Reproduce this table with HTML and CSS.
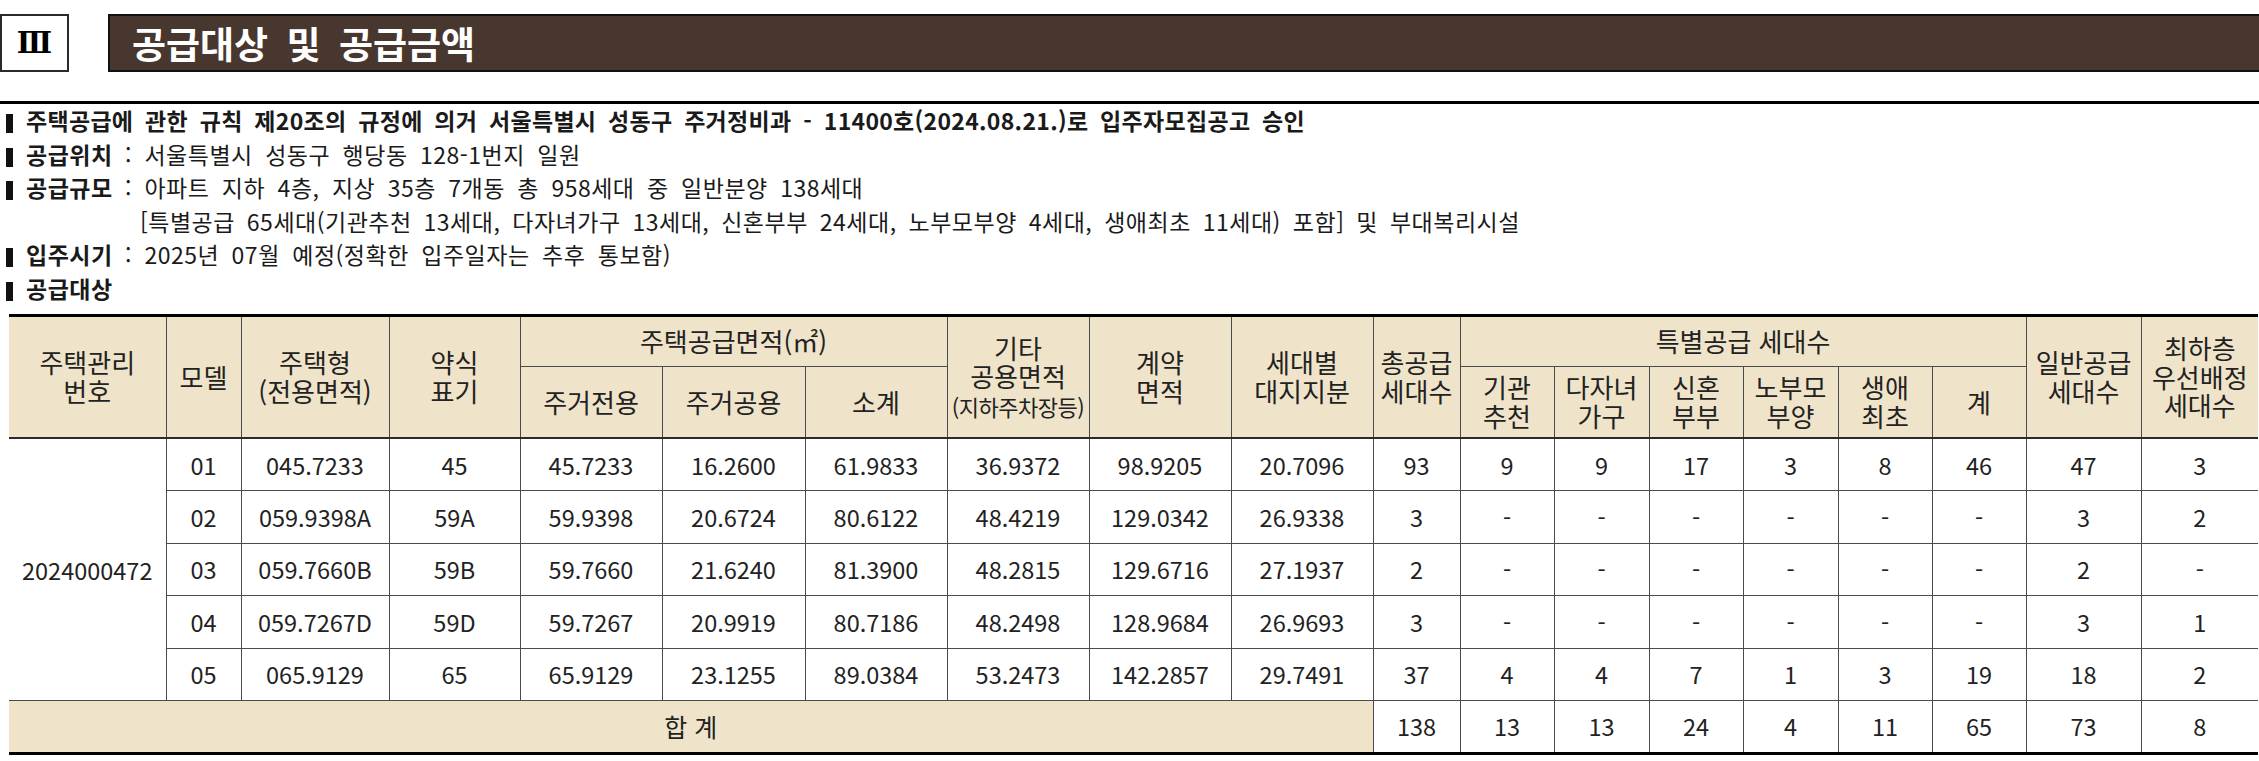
FILE: index.html
```html
<!DOCTYPE html>
<html lang="ko">
<head>
<meta charset="utf-8">
<title>공급대상 및 공급금액</title>
<link rel="stylesheet" href="styles.css">
</head>
<body>
<header class="titlebar">
  <div class="num">Ⅲ</div>
  <h1 class="title">공급대상 및 공급금액</h1>
</header>

<section class="info">
  <p class="line strong"><span class="mark"></span>주택공급에 관한 규칙 제20조의 규정에 의거 서울특별시 성동구 주거정비과 - 11400호(2024.08.21.)로 입주자모집공고 승인</p>
  <p class="line"><span class="mark"></span><b>공급위치</b> : 서울특별시 성동구 행당동 128-1번지 일원</p>
  <p class="line"><span class="mark"></span><b>공급규모</b> : 아파트 지하 4층, 지상 35층 7개동 총 958세대 중 일반분양 138세대</p>
  <p class="line indent">[특별공급 65세대(기관추천 13세대, 다자녀가구 13세대, 신혼부부 24세대, 노부모부양 4세대, 생애최초 11세대) 포함] 및 부대복리시설</p>
  <p class="line"><span class="mark"></span><b>입주시기</b> : 2025년 07월 예정(정확한 입주일자는 추후 통보함)</p>
  <p class="line"><span class="mark"></span><b>공급대상</b></p>
</section>

<table class="supply">
  <colgroup>
    <col class="c157"><col class="c75"><col class="c148"><col class="c131">
    <col class="c142"><col class="c143"><col class="c142"><col class="c142">
    <col class="c142"><col class="c142"><col class="c87"><col class="c94">
    <col class="c95"><col class="c94"><col class="c95"><col class="c94">
    <col class="c94"><col class="c115"><col class="c117">
  </colgroup>
  <thead>
    <tr class="hrow1">
      <th rowspan="2" class="hb">주택관리<br>번호</th>
      <th rowspan="2" class="hb">모델</th>
      <th rowspan="2" class="hb">주택형<br>(전용면적)</th>
      <th rowspan="2" class="hb">약식<br>표기</th>
      <th colspan="3">주택공급면적(㎡)</th>
      <th rowspan="2" class="hb">기타<br>공용면적<br><span class="small">(지하주차장등)</span></th>
      <th rowspan="2" class="hb">계약<br>면적</th>
      <th rowspan="2" class="hb">세대별<br>대지지분</th>
      <th rowspan="2" class="hb">총공급<br>세대수</th>
      <th colspan="6">특별공급 세대수</th>
      <th rowspan="2" class="hb">일반공급<br>세대수</th>
      <th rowspan="2" class="hb">최하층<br>우선배정<br>세대수</th>
    </tr>
    <tr class="hrow2">
      <th class="hb">주거전용</th>
      <th class="hb">주거공용</th>
      <th class="hb">소계</th>
      <th class="hb">기관<br>추천</th>
      <th class="hb">다자녀<br>가구</th>
      <th class="hb">신혼<br>부부</th>
      <th class="hb">노부모<br>부양</th>
      <th class="hb">생애<br>최초</th>
      <th class="hb">계</th>
    </tr>
  </thead>
  <tbody>
    <tr class="drow">
      <td rowspan="5">2024000472</td>
      <td>01</td><td>045.7233</td><td>45</td><td>45.7233</td><td>16.2600</td><td>61.9833</td><td>36.9372</td><td>98.9205</td><td>20.7096</td><td>93</td>
      <td>9</td><td>9</td><td>17</td><td>3</td><td>8</td><td>46</td><td>47</td><td>3</td>
    </tr>
    <tr class="drow">
      <td>02</td><td>059.9398A</td><td>59A</td><td>59.9398</td><td>20.6724</td><td>80.6122</td><td>48.4219</td><td>129.0342</td><td>26.9338</td><td>3</td>
      <td>-</td><td>-</td><td>-</td><td>-</td><td>-</td><td>-</td><td>3</td><td>2</td>
    </tr>
    <tr class="drow">
      <td>03</td><td>059.7660B</td><td>59B</td><td>59.7660</td><td>21.6240</td><td>81.3900</td><td>48.2815</td><td>129.6716</td><td>27.1937</td><td>2</td>
      <td>-</td><td>-</td><td>-</td><td>-</td><td>-</td><td>-</td><td>2</td><td>-</td>
    </tr>
    <tr class="drow">
      <td>04</td><td>059.7267D</td><td>59D</td><td>59.7267</td><td>20.9919</td><td>80.7186</td><td>48.2498</td><td>128.9684</td><td>26.9693</td><td>3</td>
      <td>-</td><td>-</td><td>-</td><td>-</td><td>-</td><td>-</td><td>3</td><td>1</td>
    </tr>
    <tr class="drow">
      <td>05</td><td>065.9129</td><td>65</td><td>65.9129</td><td>23.1255</td><td>89.0384</td><td>53.2473</td><td>142.2857</td><td>29.7491</td><td>37</td>
      <td>4</td><td>4</td><td>7</td><td>1</td><td>3</td><td>19</td><td>18</td><td>2</td>
    </tr>
    <tr class="drow total">
      <td colspan="10" class="sum">합 계</td>
      <td>138</td><td>13</td><td>13</td><td>24</td><td>4</td><td>11</td><td>65</td><td>73</td><td>8</td>
    </tr>
  </tbody>
</table>
</body>
</html>
```

FILE: styles.css
```css
html, body {
  margin: 0;
  padding: 0;
  background: #ffffff;
}

body {
  font-family: "Noto Sans CJK KR", "Noto Sans", sans-serif;
  color: #1e1e1e;
  width: 2259px;
}

/* ---------- title bar ---------- */
.titlebar {
  display: flex;
  align-items: stretch;
  gap: 39px;
  height: 58px;
  margin-top: 14px;
}

.num {
  box-sizing: border-box;
  width: 69px;
  border: 2px solid #2a2a2a;
  display: flex;
  align-items: center;
  justify-content: center;
  font-family: "DejaVu Serif", "Liberation Serif", serif;
  font-weight: 700;
  font-size: 29px;
  color: #000;
}

.title {
  flex: 1;
  margin: 0;
  box-sizing: border-box;
  background: #48372f;
  border-top: 2px solid #111;
  border-bottom: 2px solid #111;
  border-left: 2px solid #111;
  color: #ffffff;
  font-size: 37px;
  font-weight: 700;
  word-spacing: 8px;
  line-height: 54px;
  padding-left: 22px;
}

/* ---------- info lines ---------- */
.info {
  margin-top: 29px;
  border-top: 3px solid #000;
}

.line {
  margin: 0;
  height: 33.6px;
  line-height: 33.6px;
  font-size: 23px;
  letter-spacing: 0.5px;
  word-spacing: 5.5px;
  padding-left: 6px;
  white-space: nowrap;
  color: #1a1a1a;
}

.line b,
.line.strong {
  font-weight: 700;
}

.line.strong {
  letter-spacing: 0.3px;
  word-spacing: 5px;
}

.mark {
  display: inline-block;
  width: 7px;
  height: 19px;
  background: #111;
  margin-right: 13px;
  vertical-align: -3px;
}

.line.indent {
  padding-left: 140px;
  word-spacing: 5px;
}

/* ---------- table ---------- */
.supply {
  margin-top: 8px;
  margin-left: 9px;
  width: 2249px;
  table-layout: fixed;
  border-collapse: collapse;
  border-top: 3px solid #000;
  border-bottom: 3px solid #000;
  border-left: hidden;
  border-right: hidden;
  font-size: 23.5px;
  color: #222;
}

.c157 { width: 157px; }
.c75 { width: 75px; }
.c148 { width: 148px; }
.c131 { width: 131px; }
.c142 { width: 142px; }
.c143 { width: 143px; }
.c87 { width: 87px; }
.c94 { width: 94px; }
.c95 { width: 95px; }
.c115 { width: 115px; }
.c117 { width: 117px; }

.supply th,
.supply td {
  border: 1px solid #4a4a4a;
  padding: 0;
  text-align: center;
  vertical-align: middle;
  line-height: 26px;
  font-weight: 400;
  white-space: nowrap;
}

.supply th {
  background: #efe4ca;
  color: #222;
  font-size: 26px;
  line-height: 28.5px;
}

.supply th.hb {
  border-bottom: 2px solid #2a2a2a;
}

.small {
  font-size: 22px;
  letter-spacing: -0.5px;
}

.hrow1 { height: 51px; }
.hrow2 { height: 72px; }
.drow { height: 52.5px; }

.supply td.sum {
  background: #efe4ca;
  font-size: 25px;
}
```
